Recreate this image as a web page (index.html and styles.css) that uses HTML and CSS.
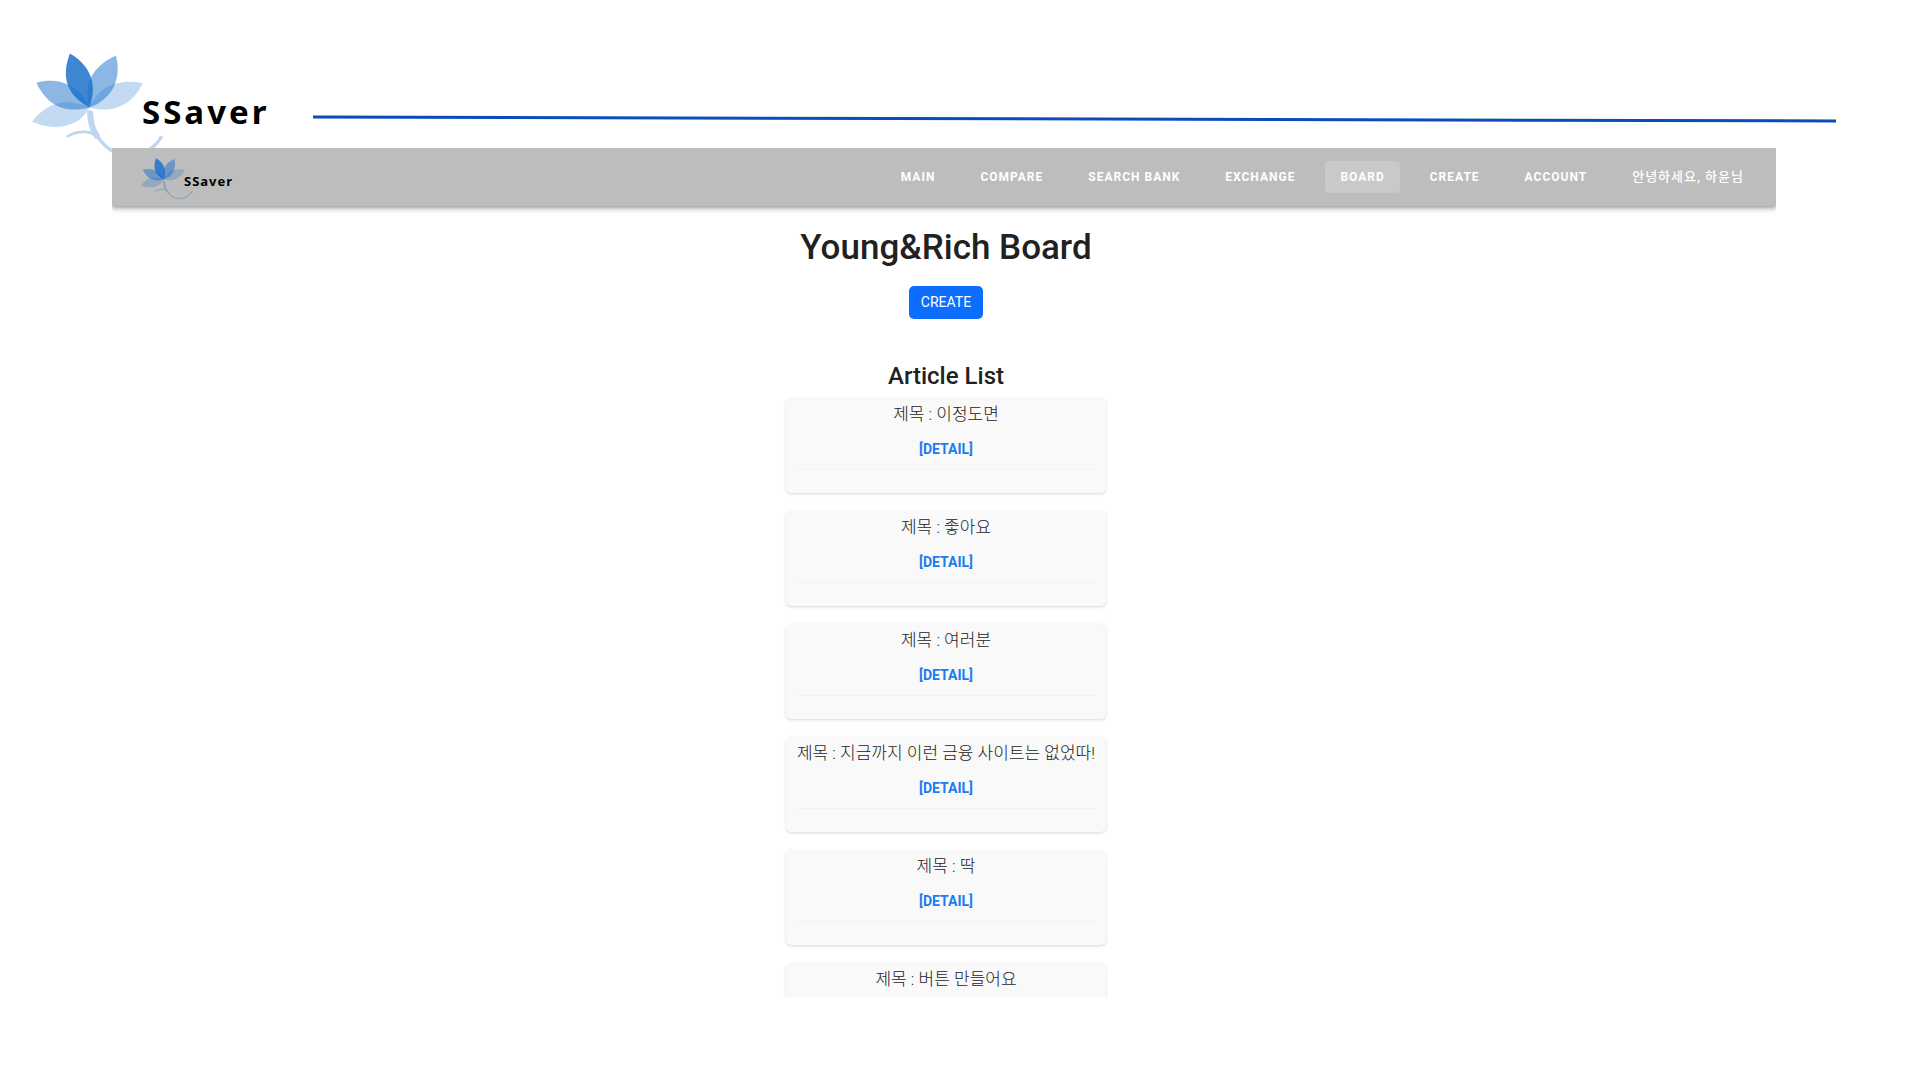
FILE: index.html
```html
<!DOCTYPE html>
<html lang="ko">
<head>
<meta charset="utf-8">
<title>SSaver</title>
<link rel="stylesheet" href="styles.css">
</head>
<body>
<svg class="symbols" aria-hidden="true">
  <symbol id="lotus" viewBox="38 40 390 315">
    <g fill="#1a70cb">
      <path opacity=".26" d="M38 244C80 190 140 170 209 202C180 262 100 275 38 244Z"/>
      <path opacity=".26" d="M368 129C290 115 235 140 209 202C270 220 335 200 368 129Z"/>
      <path opacity=".5" d="M51 128C110 112 178 130 209 202C140 220 85 200 51 128Z"/>
      <path opacity=".5" d="M288 47C215 80 190 135 209 202C280 175 305 115 288 47Z"/>
      <path opacity=".84" d="M151 41C128 100 132 160 209 202C228 150 226 85 151 41Z"/>
    </g>
    <g fill="none" stroke="#1a70cb" stroke-linecap="round" opacity=".28">
      <path stroke-width="18" d="M211 219C212 245 218 268 231 287"/>
      <path stroke-width="10" d="M226 277C245 310 275 342 323 345C370 345 401 325 422 291"/>
      <path stroke-width="8" d="M145 287C175 270 215 270 235 291"/>
    </g>
  </symbol>
</svg>

<header class="masthead">
  <div class="brand brand-large">
    <svg class="brand-mark" aria-hidden="true"><use href="#lotus"/></svg>
    <span class="brand-name">SSaver</span>
  </div>
  <svg class="rule" viewBox="0 0 1523 8" preserveAspectRatio="none" aria-hidden="true">
    <path d="M0 2L1523 6" stroke="#0a4cb8" stroke-width="3"/>
  </svg>
</header>

<div class="screen">
  <nav class="navbar">
    <a class="brand brand-small" href="#">
      <svg class="brand-mark" aria-hidden="true"><use href="#lotus"/></svg>
      <span class="brand-name">SSaver</span>
    </a>
    <div class="nav-links">
      <a href="#">MAIN</a>
      <a href="#">COMPARE</a>
      <a href="#">SEARCH BANK</a>
      <a href="#">EXCHANGE</a>
      <a class="active" href="#">BOARD</a>
      <a href="#">CREATE</a>
      <a href="#">ACCOUNT</a>
      <a class="greeting" href="#">안녕하세요, 하윤님</a>
    </div>
  </nav>
  <main class="board">
    <h1>Young&amp;Rich Board</h1>
    <button class="create" type="button">CREATE</button>
    <h2>Article List</h2>
    <div class="articles">
      <article class="card"><p>제목 : 이정도면</p><a href="#">[DETAIL]</a><hr></article>
      <article class="card"><p>제목 : 좋아요</p><a href="#">[DETAIL]</a><hr></article>
      <article class="card"><p>제목 : 여러분</p><a href="#">[DETAIL]</a><hr></article>
      <article class="card"><p>제목 : 지금까지 이런 금융 사이트는 없었따!</p><a href="#">[DETAIL]</a><hr></article>
      <article class="card"><p>제목 : 딱</p><a href="#">[DETAIL]</a><hr></article>
      <article class="card"><p>제목 : 버튼 만들어요</p></article>
    </div>
  </main>
</div>
</body>
</html>
```
FILE: styles.css
```css
* { box-sizing: border-box; }

body {
  margin: 0;
  height: 100vh;
  display: flex;
  flex-direction: column;
  overflow: hidden;
  background: #fff;
  color: #212121;
  font-family: Roboto, "Noto Sans CJK KR", sans-serif;
}

a { text-decoration: none; }

.symbols { position: absolute; width: 0; height: 0; }

/* Slide header */
.masthead {
  flex: none;
  display: flex;
  align-items: flex-start;
  height: 148px;
  padding: 53px 84px 0 32px;
}

.brand {
  display: flex;
  flex: none;
  align-items: flex-start;
  color: #000;
  font-family: "Noto Sans", sans-serif;
  font-weight: 700;
}
.brand-mark { flex: none; }

.brand-large { width: 281px; }
.brand-large .brand-mark { width: 131px; height: 106px; }
.brand-large .brand-name {
  margin: 39px 0 0 -21px;
  font-size: 33px;
  line-height: 40px;
  letter-spacing: 3px;
}

.rule {
  flex: 1;
  min-width: 0;
  height: 8px;
  margin-top: 62px;
}

/* Application screen */
.screen {
  flex: 1;
  min-height: 0;
  margin: 0 144px 83px 112px;
  overflow: hidden;
  background: #fff;
}

.navbar {
  display: flex;
  align-items: center;
  justify-content: space-between;
  height: 58px;
  padding: 0 17px 0 29px;
  background: #bdbdbd;
  box-shadow: 0 2px 4px rgba(0, 0, 0, .3), 0 4px 6px rgba(0, 0, 0, .1);
}

.brand-small .brand-mark { width: 52px; height: 42px; margin-top: 4px; }
.brand-small .brand-name {
  margin: 17px 0 0 -9px;
  font-size: 13px;
  line-height: 20px;
  letter-spacing: 1px;
}

.nav-links { display: flex; gap: 15px; }
.nav-links a {
  padding: 0 15px;
  border-radius: 4px;
  color: #fff;
  font-size: 12px;
  font-weight: 700;
  line-height: 32px;
  letter-spacing: 1px;
}
.nav-links .active { background: #c9c9c9; }
.nav-links .greeting { font-size: 13px; font-weight: 500; }

.board {
  display: flex;
  flex-direction: column;
  align-items: center;
  padding: 20px 0 0 4px;
}

h1, h2 { margin: 0; font-weight: 500; }
h1 { font-size: 35px; line-height: 44px; }
h2 { margin-top: 42px; font-size: 24px; line-height: 30px; }

.create {
  margin-top: 16px;
  padding: 0 12px;
  border: 0;
  border-radius: 5px;
  background: #0d6efd;
  color: #fff;
  font: 400 14px/33px Roboto, sans-serif;
}

.articles {
  display: flex;
  flex-direction: column;
  gap: 18px;
  width: 320px;
  margin-top: 7px;
}

.card {
  display: flex;
  flex-direction: column;
  align-items: center;
  height: 95px;
  padding: 3px 10px 0;
  border-radius: 5px;
  background: #f9f9f9;
  box-shadow: 0 1px 3px rgba(0, 0, 0, .16);
  white-space: nowrap;
}
.card p {
  margin: 0;
  color: #222;
  font-size: 17px;
  font-weight: 300;
  line-height: 26px;
}
.card a {
  margin-top: 12px;
  color: #1a7cf0;
  font-size: 14px;
  font-weight: 700;
  line-height: 20px;
}
.card hr {
  width: 100%;
  margin: 10px 0 0;
  border: 0;
  border-top: 1px solid #f2f2f2;
}
```
